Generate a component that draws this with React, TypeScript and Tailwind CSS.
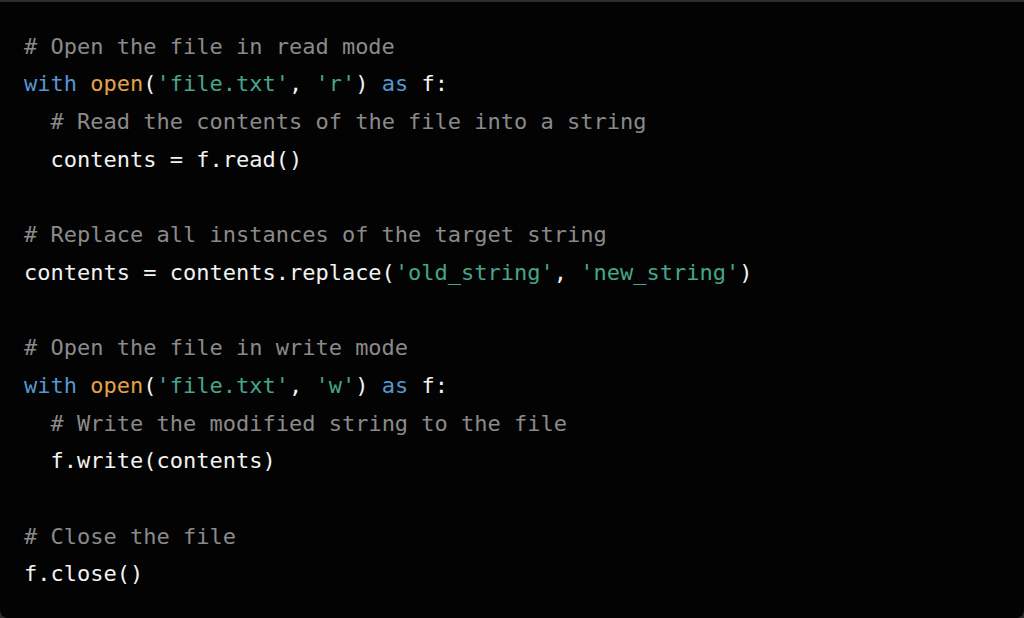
import React from "react";

const C = ({ children }: { children: React.ReactNode }) => <span className="text-[#8a8a8a]">{children}</span>;
const K = ({ children }: { children: React.ReactNode }) => <span className="text-[#5597d2]">{children}</span>;
const F = ({ children }: { children: React.ReactNode }) => <span className="text-[#e3a248]">{children}</span>;
const S = ({ children }: { children: React.ReactNode }) => <span className="text-[#46a58a]">{children}</span>;

export default function App() {
  return (
    <div className="w-[1024px] h-[618px] bg-[#2c2c2e] pt-[2px] overflow-hidden">
      <div className="h-[616px] bg-[#030303] rounded-b-[8px] pl-[24px] pt-[25.5px]">
        <pre
          className="text-[#f2f2f2] text-[22px] leading-[37.7px] m-0"
          style={{ fontFamily: '"DejaVu Sans Mono", Menlo, monospace' }}
        >
          <C># Open the file in read mode</C>{"\n"}
          <K>with</K> <F>open</F>(<S>'file.txt'</S>, <S>'r'</S>) <K>as</K> f:{"\n"}
          {"  "}<C># Read the contents of the file into a string</C>{"\n"}
          {"  "}contents = f.read(){"\n"}
          {"\n"}
          <C># Replace all instances of the target string</C>{"\n"}
          contents = contents.replace(<S>'old_string'</S>, <S>'new_string'</S>){"\n"}
          {"\n"}
          <C># Open the file in write mode</C>{"\n"}
          <K>with</K> <F>open</F>(<S>'file.txt'</S>, <S>'w'</S>) <K>as</K> f:{"\n"}
          {"  "}<C># Write the modified string to the file</C>{"\n"}
          {"  "}f.write(contents){"\n"}
          {"\n"}
          <C># Close the file</C>{"\n"}
          f.close()
        </pre>
      </div>
    </div>
  );
}
